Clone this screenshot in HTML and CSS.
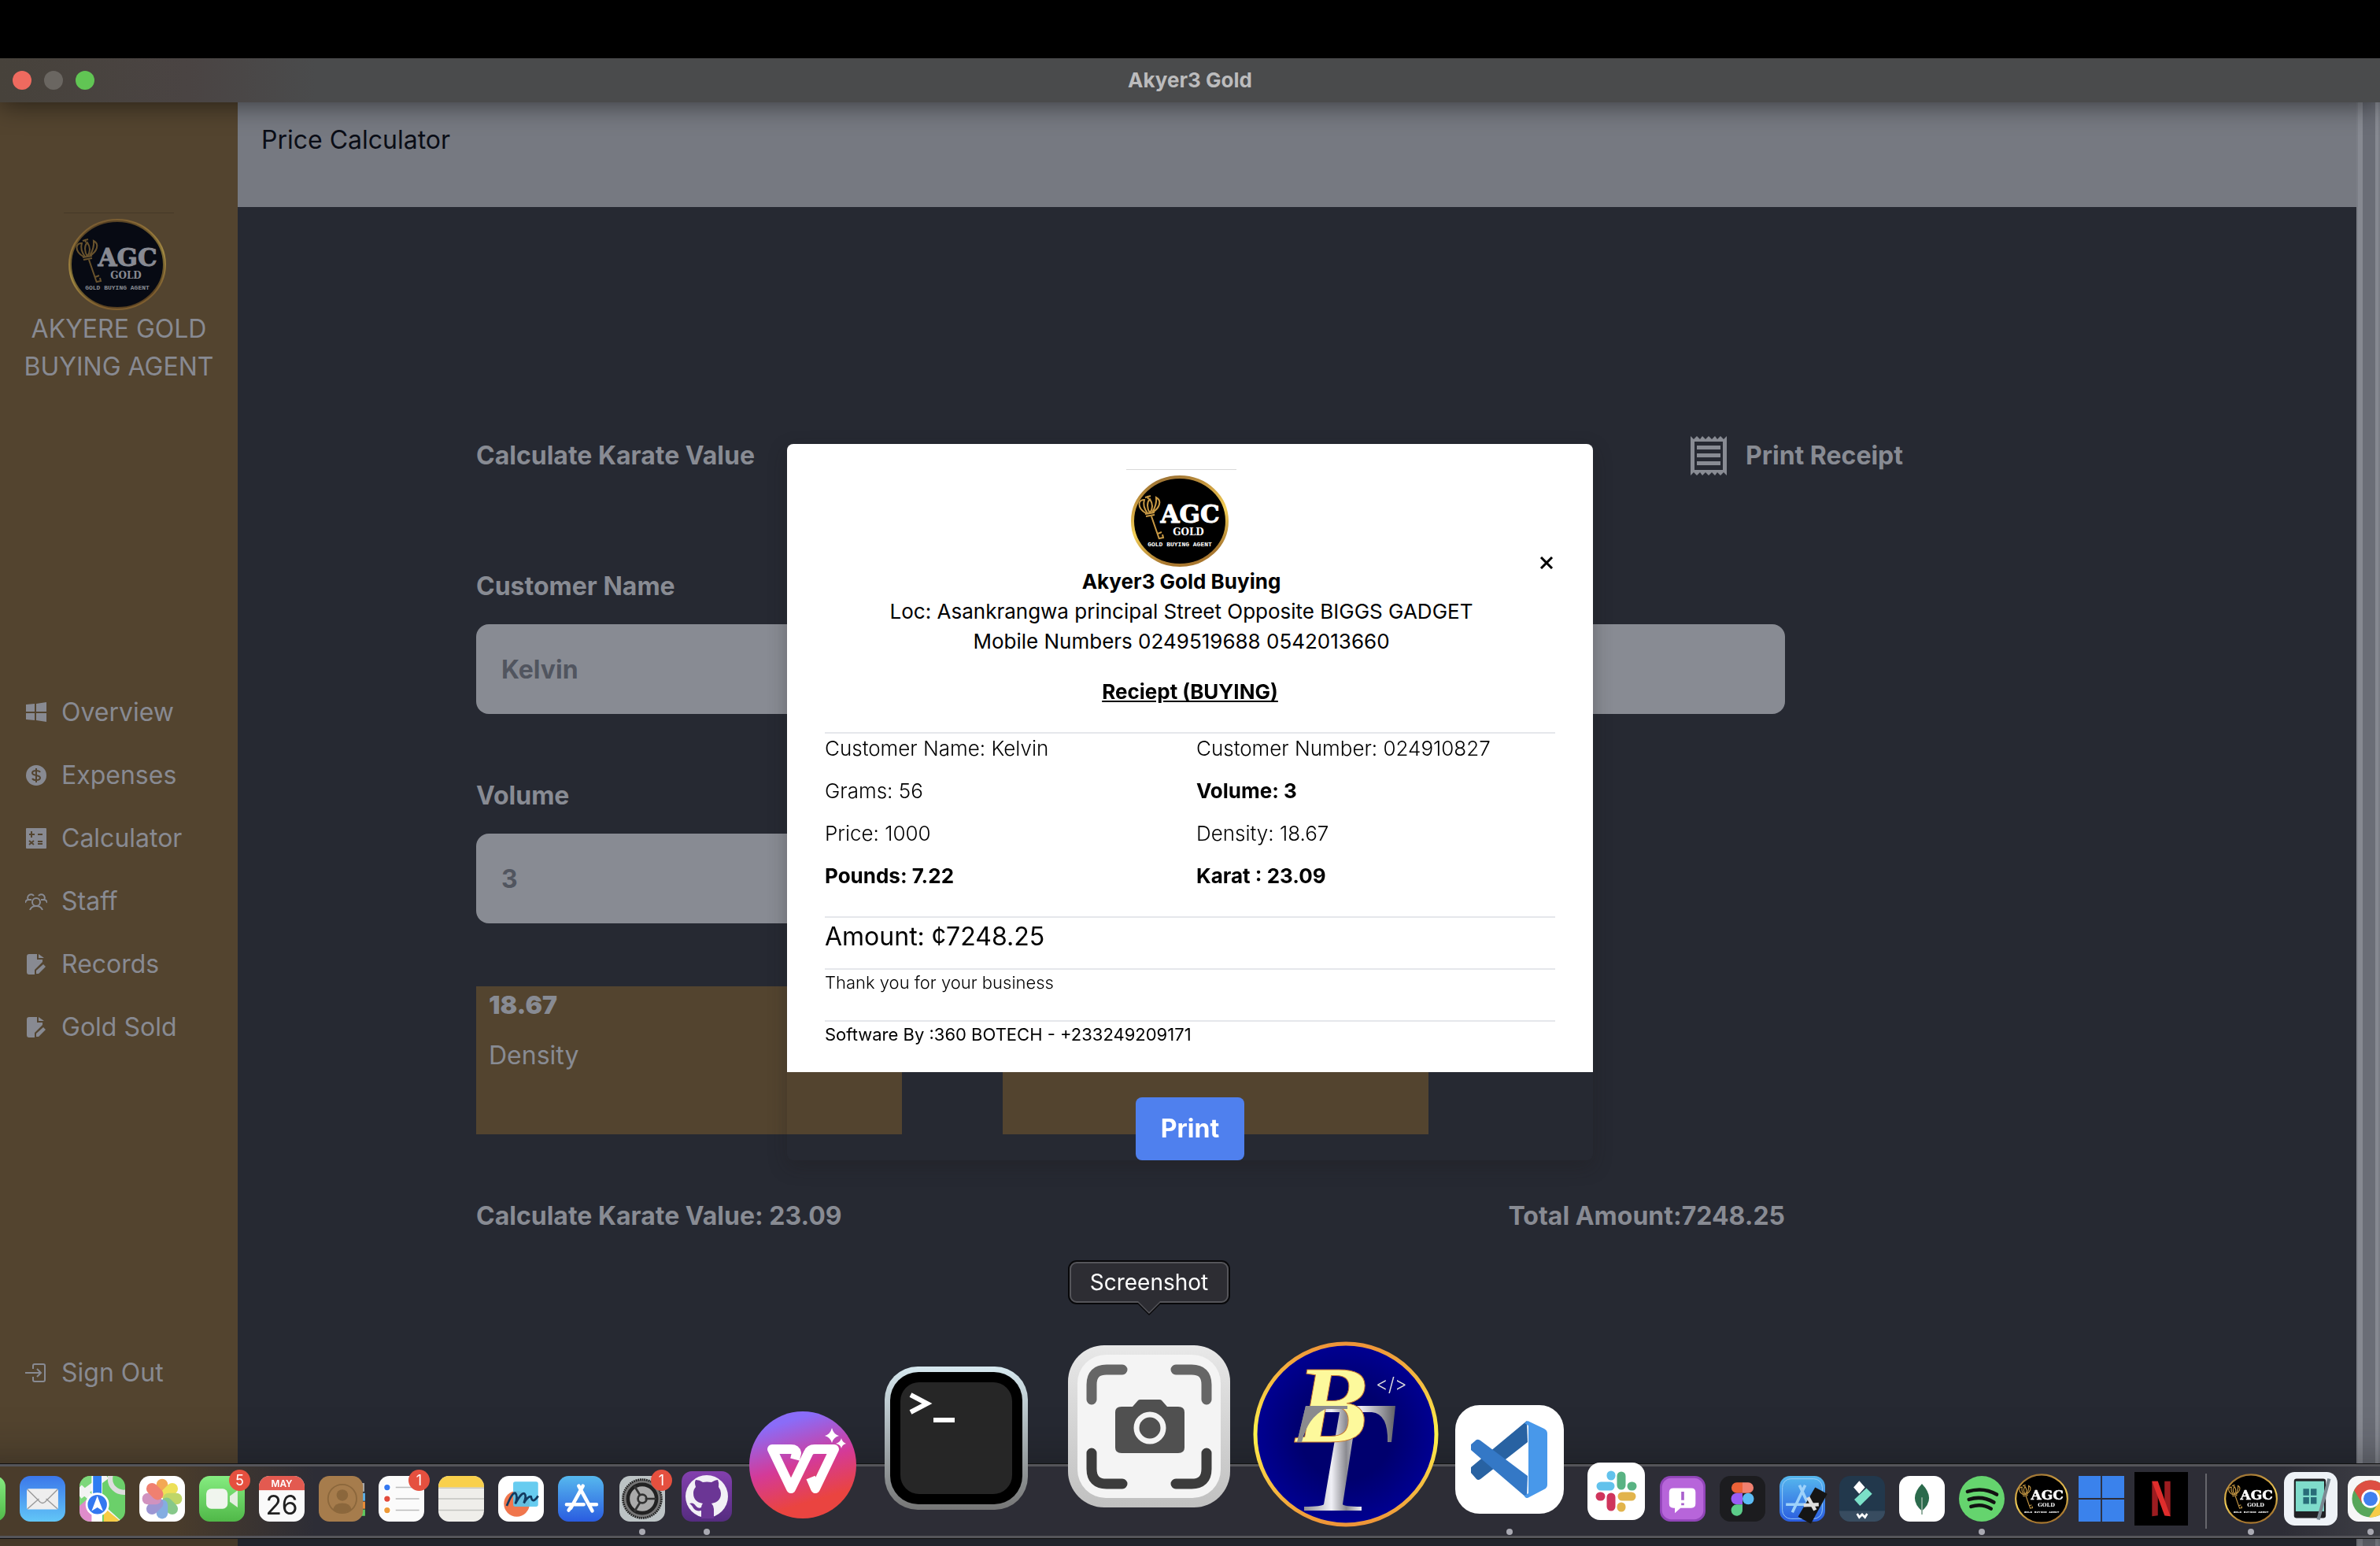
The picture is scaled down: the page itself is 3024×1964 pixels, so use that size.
FILE: index.html
```html
<!DOCTYPE html>
<html lang="en">
  <head>
    <meta charset="UTF-8" />
    <meta name="viewport" content="width=device-width, initial-scale=1.0" />
    <title>Akyer3 Gold</title>
    <link rel="stylesheet" href="styles.css">
  </head>

  <body>
    <!-- shared shapes -->
    <svg class="defs" aria-hidden="true">
      <defs>
        <linearGradient id="gold" x1="0" y1="0" x2="0.3" y2="1">
          <stop offset="0" stop-color="#8a6230" />
          <stop offset="0.3" stop-color="#c8993f" />
          <stop offset="0.6" stop-color="#f2cf57" />
          <stop offset="1" stop-color="#a8772f" />
        </linearGradient>
        <linearGradient id="wps" x1="0.3" y1="0" x2="0.6" y2="1">
          <stop offset="0.1" stop-color="#8a6cf8" />
          <stop offset="0.5" stop-color="#d43a98" />
          <stop offset="0.85" stop-color="#ea4440" />
        </linearGradient>
        <linearGradient id="frame" x1="0" y1="0" x2="0" y2="1">
          <stop offset="0" stop-color="#d6e8ef" />
          <stop offset="1" stop-color="#767676" />
        </linearGradient>
        <linearGradient id="shell" x1="0" y1="0" x2="0" y2="1">
          <stop offset="0" stop-color="#e8e8e8" />
          <stop offset="1" stop-color="#c0c0c0" />
        </linearGradient>
        <linearGradient id="ring" x1="0" y1="0" x2="0" y2="1">
          <stop offset="0" stop-color="#ee9438" />
          <stop offset="0.5" stop-color="#fdf24c" />
          <stop offset="1" stop-color="#ee9438" />
        </linearGradient>
        <radialGradient id="navy">
          <stop offset="0.5" stop-color="#00006e" />
          <stop offset="1" stop-color="#000092" />
        </radialGradient>
        <linearGradient id="steel" x1="0" y1="0" x2="1" y2="0">
          <stop offset="0" stop-color="#77777c" />
          <stop offset="0.35" stop-color="#f0f0f6" />
          <stop offset="0.5" stop-color="#8a8a90" />
          <stop offset="0.65" stop-color="#ececf2" />
          <stop offset="1" stop-color="#606066" />
        </linearGradient>
        <linearGradient id="blue" x1="0" y1="0" x2="0" y2="1">
          <stop offset="0" stop-color="#3b77ea" />
          <stop offset="1" stop-color="#62c6f7" />
        </linearGradient>
        <linearGradient id="store" x1="0" y1="0" x2="0" y2="1">
          <stop offset="0" stop-color="#56b8ee" />
          <stop offset="1" stop-color="#2a5ce0" />
        </linearGradient>
        <linearGradient id="green" x1="0" y1="0" x2="0" y2="1">
          <stop offset="0" stop-color="#85ec80" />
          <stop offset="1" stop-color="#50b848" />
        </linearGradient>
        <linearGradient id="hub" x1="0" y1="0" x2="0" y2="1">
          <stop offset="0" stop-color="#8340ae" />
          <stop offset="1" stop-color="#552c80" />
        </linearGradient>
        <clipPath id="tile"><rect width="64" height="64" rx="15" /></clipPath>
      </defs>
      <symbol id="file-edit" viewBox="0 0 28 28">
        <path fill="currentColor" d="M5 1H15V8H22V11L12 21V27H5Q2 27 2 24V4Q2 1 5 1ZM17 1L24 6H17ZM14 25V22L23 14L26 17L17 26H14Z" />
      </symbol>
    </svg>

    <div class="window">
      <header class="titlebar">
        <span class="light close"></span>
        <span class="light minimise"></span>
        <span class="light zoom"></span>
        <div class="window-title">Akyer3 Gold</div>
      </header>

      <div class="app">
        <aside class="sidebar">
          <div class="brand">
            <div class="logo">
              <svg viewBox="0 0 124 118">
                <g id="agc">
                  <ellipse class="agc-disc" cx="62" cy="59" rx="60" ry="56" />
                  <g class="agc-gold">
                    <ellipse cx="62" cy="59" rx="60" ry="56" fill="none" stroke="url(#gold)" stroke-width="4" />
                    <path d="M19 49C7 42 9 31 17 32C15 38 18 45 21 49M24 49C20 42 20 35 24 31C28 37 28 43 24 49M27 48C36 43 40 33 32 29C33 37 30 43 27 48M18 50L30 48M19 53L30 51M21 27L22 31M18 29L25 27" />
                    <path d="M26 53L36 82M36 81L41 80L40 76M34 75L39 73" />
                  </g>
                  <g class="agc-text">
                    <text class="agc-name" x="75" y="61">AGC</text>
                    <text class="agc-sub" x="73" y="77">GOLD</text>
                    <text class="agc-tag" x="62" y="91">GOLD BUYING AGENT</text>
                  </g>
                </g>
              </svg>
            </div>
            <div>AKYERE GOLD<br />BUYING AGENT</div>
          </div>
          <nav class="menu">
            <a href="#"><svg viewBox="0 0 28 28"><path fill="currentColor" d="M1 4L12 3V13H1ZM14 3L27 1V13H14ZM1 15H12V24L1 23ZM14 15H27V26L14 24Z" /></svg>Overview</a>
            <a href="#"><svg viewBox="0 0 28 28"><circle cx="14" cy="14" r="13" fill="currentColor" /><path d="M19 10Q18 8 14 8Q9 8 9 11Q9 13 14 14Q19 15 19 17Q19 20 14 20Q10 20 9 18M14 5V23" fill="none" stroke="#53442f" stroke-width="2" /></svg>Expenses</a>
            <a href="#"><svg viewBox="0 0 28 28"><rect x="1" y="1" width="26" height="26" rx="1" fill="currentColor" /><path d="M5 9H12M8 5V13M16 9H22M5 17L11 22M11 17L5 22M16 18H22M16 21H22" stroke="#53442f" stroke-width="2" /></svg>Calculator</a>
            <a href="#"><svg viewBox="0 0 28 28"><g fill="none" stroke="currentColor" stroke-width="2"><circle cx="14" cy="15" r="5" /><path d="M6 25Q8 20 14 20Q20 20 22 25M11 7A4 4 0 1 0 4 12Q1 12 0 16M17 7A4 4 0 1 1 24 12Q27 12 28 16M4 12H8M24 12H20" /></g></svg>Staff</a>
            <a href="#"><svg><use href="#file-edit" /></svg>Records</a>
            <a href="#"><svg><use href="#file-edit" /></svg>Gold Sold</a>
          </nav>
          <div class="menu">
            <a href="#"><svg viewBox="0 0 28 28"><path d="M10 9V5Q10 3 12 3H23Q25 3 25 5V23Q25 25 23 25H12Q10 25 10 23V19M0 14H19M15 9L20 14L15 19" fill="none" stroke="currentColor" stroke-width="2" /></svg>Sign Out</a>
          </div>
        </aside>

        <main class="main">
          <div class="page-head">Price Calculator</div>
          <div class="content">
            <div class="title-row">
              <span>Calculate Karate Value</span>
              <button class="print-receipt">
                <svg viewBox="0 0 46 50"><path fill="currentColor" fill-rule="evenodd" d="M0 0L4 4L8 0L12 4L15 0L19 4L23 0L27 4L31 0L34 4L38 0L42 4L46 0V50L42 46L38 50L34 46L31 50L27 46L23 50L19 46L15 50L12 46L8 50L4 46L0 50ZM5 7V43H41V7ZM8 12H38V17H8ZM8 22H38V27H8ZM8 32H38V37H8Z" /></svg>
                Print Receipt
              </button>
            </div>
            <form class="calc-form">
              <div class="field">
                <label for="customer">Customer Name</label>
                <input id="customer" type="text" value="Kelvin" />
              </div>
              <div class="field">
                <input type="text" aria-label="Customer Number" />
              </div>
              <div class="field">
                <label for="volume">Volume</label>
                <input id="volume" type="text" value="3" />
              </div>
            </form>
            <div class="cards">
              <div class="card"><b>18.67</b><span>Density</span></div>
              <div class="card"></div>
            </div>
            <div class="totals">
              <span>Calculate Karate Value: 23.09</span>
              <span>Total Amount:7248.25</span>
            </div>
          </div>
        </main>
        <div class="scrollbar"></div>
      </div>
    </div>

    <div class="overlay">
      <div class="modal">
        <div class="receipt">
          <div class="receipt-head">
            <div class="shop">
              <div class="logo"><svg viewBox="0 0 124 118"><use href="#agc" /></svg></div>
              <b>Akyer3 Gold Buying</b>
              <div>Loc: Asankrangwa principal Street Opposite BIGGS GADGET</div>
              <div>Mobile Numbers 0249519688 0542013660</div>
            </div>
            <button class="dismiss" aria-label="Close">
              <svg viewBox="0 0 16 16"><path d="M1 1L15 15M15 1L1 15" stroke="#000" stroke-width="3" /></svg>
            </button>
          </div>
          <h1>Reciept (BUYING)</h1>
          <div class="details">
            <div>Customer Name: Kelvin</div>
            <div>Customer Number: 024910827</div>
            <div>Grams: 56</div>
            <b>Volume: 3</b>
            <div>Price: 1000</div>
            <div>Density: 18.67</div>
            <b>Pounds: 7.22</b>
            <b>Karat : 23.09</b>
          </div>
          <div class="amount">Amount: ¢7248.25</div>
          <div class="note">Thank you for your business</div>
          <div class="note">Software By :360 BOTECH - +233249209171</div>
        </div>
        <button class="print">Print</button>
      </div>
    </div>

    <div class="dock">
      <div class="slot"><svg viewBox="0 0 64 64"><rect width="64" height="64" rx="15" fill="url(#green)" /></svg></div>
      <div class="slot"><svg viewBox="0 0 64 64"><rect width="64" height="64" rx="15" fill="url(#blue)" /><rect x="10" y="18" width="44" height="29" rx="3" fill="#eee" /><path d="M11 46L27 32M53 46L37 32M11 19L29 37Q32 39 35 37L53 19" fill="none" stroke="#999" stroke-width="1.5" /></svg></div>
      <div class="slot"><svg viewBox="0 0 64 64"><g clip-path="url(#tile)"><rect width="64" height="64" fill="#6bd06a" /><path d="M0 26L30 38V64H0Z" fill="#df8ccb" /><path d="M0 0H18V26L0 42Z" fill="#7ed77b" /><path d="M0 16L64 74M0 28L38 0" stroke="#f3f3f3" stroke-width="9" /><path d="M34 44L58 64H34Z" fill="#f7cc45" /><path d="M17 0H32V64H17Z" fill="#fff" /><path d="M19 0H31V34H19Z" fill="#2f7df2" /><circle cx="62" cy="4" r="19" fill="none" stroke="#ddd" stroke-width="7" /></g><circle cx="25" cy="40" r="15" fill="#3478f0" stroke="#fff" stroke-width="3" /><path d="M25 28L33 49L25 44L17 49Z" fill="#fff" /></svg></div>
      <div class="slot"><svg viewBox="0 0 64 64"><rect width="64" height="64" rx="15" fill="#fff" /><g opacity="0.85"><rect x="24" y="4" width="16" height="27" rx="8" fill="#f29a37" /><rect x="24" y="4" width="16" height="27" rx="8" fill="#eadb3c" transform="rotate(45 32 32)" /><rect x="24" y="4" width="16" height="27" rx="8" fill="#b5d04e" transform="rotate(90 32 32)" /><rect x="24" y="4" width="16" height="27" rx="8" fill="#73bf76" transform="rotate(135 32 32)" /><rect x="24" y="4" width="16" height="27" rx="8" fill="#6f9fdc" transform="rotate(180 32 32)" /><rect x="24" y="4" width="16" height="27" rx="8" fill="#8b84cc" transform="rotate(225 32 32)" /><rect x="24" y="4" width="16" height="27" rx="8" fill="#c87fb5" transform="rotate(270 32 32)" /><rect x="24" y="4" width="16" height="27" rx="8" fill="#ee6b58" transform="rotate(315 32 32)" /></g></svg></div>
      <div class="slot"><svg viewBox="0 0 64 64"><rect width="64" height="64" rx="15" fill="url(#green)" /><rect x="10" y="18" width="30" height="28" rx="7" fill="#f0f5ee" /><path d="M43 28L54 20V44L43 36Z" fill="#e4efe1" /></svg><span class="badge">5</span></div>
      <div class="slot"><svg viewBox="0 0 64 64"><g clip-path="url(#tile)"><rect width="64" height="64" fill="#fafafa" /><rect width="64" height="20" fill="#e35a50" /></g><g text-anchor="middle" font-family="Inter, sans-serif"><text x="32" y="15" font-size="13" font-weight="600" fill="#fff">MAY</text><text x="32" y="54" font-size="37" fill="#222">26</text></g></svg></div>
      <div class="slot"><svg viewBox="0 0 64 64"><path d="M58 10H64V22H58Z" fill="#aaa" /><path d="M58 24H65V35H58Z" fill="#5cb4ee" /><path d="M58 36H65V46H58Z" fill="#f08f38" /><path d="M58 47H65V56H58Z" fill="#60cc60" /><rect width="62" height="64" rx="15" fill="#a67c4c" /><g fill="#8b673c"><circle cx="33" cy="27" r="8" /><path d="M20 47Q22 38 33 38Q44 38 46 47Q33 56 20 47Z" /></g><circle cx="33" cy="32" r="20" fill="none" stroke="#8b673c" stroke-width="2" /></svg></div>
      <div class="slot"><svg viewBox="0 0 64 64"><rect width="64" height="64" rx="15" fill="#fbfbfb" /><path d="M24 16H57M24 32H57M24 48H57" stroke="#bbb" stroke-width="1.5" /><g stroke="#fff" stroke-width="2"><circle cx="12" cy="16" r="5" fill="#3478f0" /><circle cx="12" cy="32" r="5" fill="#e24b3c" /><circle cx="12" cy="48" r="5" fill="#ee9a37" /></g></svg><span class="badge">1</span></div>
      <div class="slot"><svg viewBox="0 0 64 64"><g clip-path="url(#tile)"><rect width="64" height="64" fill="#efeeea" /><rect width="64" height="16" fill="#f9d04c" /><path d="M0 17H64M0 32H64M0 48H64" stroke="#c4c4c0" stroke-width="1.5" /></g></svg></div>
      <div class="slot"><svg viewBox="0 0 64 64"><rect width="64" height="64" rx="15" fill="#fff" /><circle cx="26" cy="39" r="18" fill="#f0764d" /><rect x="21" y="8" width="35" height="35" rx="3" fill="#56c6ee" opacity="0.9" /><path d="M12 42Q20 22 24 24Q28 28 24 39Q33 22 37 25Q40 28 36 38Q42 28 46 29Q48 40 56 28" fill="none" stroke="#123a60" stroke-width="3" /></svg></div>
      <div class="slot"><svg viewBox="0 0 64 64"><rect width="64" height="64" rx="15" fill="url(#store)" /><path d="M35 14L18 45M29 14L48 49M12 40H36M43 40H54M15 48L17 45" stroke="#fff" stroke-width="5" stroke-linecap="round" /></svg></div>
      <div class="slot near running"><svg viewBox="0 0 64 64"><rect width="64" height="64" rx="15" fill="#bcc3c5" /><circle cx="32" cy="32" r="27" fill="#777" stroke="#222" stroke-width="3" stroke-dasharray="2 1" /><circle cx="32" cy="32" r="20" fill="#aaa" stroke="#222" stroke-width="5" /><circle cx="32" cy="32" r="6" fill="none" stroke="#333" stroke-width="3" /><path d="M36 32H52M29 27L21 14M29 37L21 50" stroke="#333" stroke-width="3" /></svg><span class="badge">1</span></div>
      <div class="slot github running"><svg viewBox="0 0 64 64"><rect width="64" height="64" rx="13" fill="url(#hub)" /><circle cx="32" cy="32" r="27" fill="#f2f0f6" /><path d="M25 60V50Q17 52 14 45Q12 42 10 41Q15 39 18 44Q21 48 25 46Q25 43 27 41Q15 39 15 28Q15 23 18 20Q16 14 18 11Q23 11 27 14Q32 13 38 14Q43 11 46 11Q48 15 47 20Q50 24 50 28Q50 39 38 41Q41 44 41 48V60Z" fill="#6b3695" /></svg></div>
      <div class="slot wps"><svg viewBox="0 0 137 137"><circle cx="68" cy="68" r="68" fill="url(#wps)" /><path d="M58 61L60 53Q59 48 53 48L29 48L53 98L75 53Q77 48 83 48H108L84 98L78 84" fill="none" stroke="#fff" stroke-width="12" stroke-linejoin="round" /><path d="M105 21Q107 29 114 31Q107 33 105 40Q103 33 96 31Q103 29 105 21ZM117 34Q118 39 123 41Q118 42 117 47Q116 42 110 41Q116 39 117 34Z" fill="#fff" /></svg></div>
      <div class="slot terminal"><svg viewBox="0 0 182 182"><rect width="182" height="182" rx="42" fill="url(#frame)" /><rect x="7" y="7" width="168" height="168" rx="36" fill="#000" /><rect x="20" y="20" width="142" height="142" rx="24" fill="#262626" /><path d="M33 36L54 47L33 58" fill="none" stroke="#fff" stroke-width="6" /><path d="M62 68H89" stroke="#fff" stroke-width="6" /></svg></div>
      <div class="slot screenshot">
        <div class="tooltip">Screenshot</div>
        <svg viewBox="0 0 206 206"><rect width="206" height="206" rx="46" fill="url(#shell)" /><rect x="12" y="12" width="182" height="182" rx="36" fill="#f4f4f4" /><g fill="none" stroke-width="13" stroke-linecap="round"><path d="M30 69V50Q30 31 49 31H69M137 31H157Q176 31 176 50V69" stroke="#666" /><path d="M30 137V157Q30 176 49 176H69M137 176H157Q176 176 176 157V137" stroke="#3c3c3c" /></g><path d="M68 78H82L89 70Q90 69 92 69H116Q118 69 119 70L126 78H140Q148 78 148 85V130Q148 137 140 137H68Q60 137 60 130V85Q60 78 68 78Z" fill="#505050" /><circle cx="104" cy="105" r="17" fill="none" stroke="#f4f4f4" stroke-width="7" /></svg>
      </div>
      <div class="slot botech"><svg viewBox="0 0 236 236"><circle cx="118" cy="118" r="115" fill="url(#navy)" stroke="url(#ring)" stroke-width="5" /><path d="M67 82H181L176 128H171Q172 92 151 90H132L114 207Q115 210 138 210V215H65V210Q88 210 90 207L110 90H90Q72 92 61 128H56Z" fill="url(#steel)" /><text x="54" y="128" font-size="140" font-family="Liberation Serif, serif" font-style="italic" font-weight="bold" fill="#fdf99c" stroke="#c87a32" stroke-width="1">B</text><path d="M67 82H120V86H92Q70 96 62 128H56Z" fill="#8a8a8e" /><text x="156" y="63" font-size="24" font-family="Inter, sans-serif" font-weight="300" fill="#ddd">&lt;/&gt;</text></svg></div>
      <div class="slot code running"><svg viewBox="0 0 138 138"><rect width="138" height="138" rx="31" fill="#fff" /><path d="M91 20L20 79V86L27 94Q29 96 32 94L92 47Z" fill="#2862a2" /><path d="M91 118L20 57V50L27 44Q29 43 32 45L92 90Z" fill="#3478c6" /><path d="M92 20L113 30Q117 32 117 36V101Q117 105 113 107L92 118Q88 118 88 115L93 112V26L88 23Z" fill="#4898ea" /></svg></div>
      <div class="slot slack"><svg viewBox="0 0 73 73"><rect width="73" height="73" rx="16" fill="#fff" /><g stroke-width="11" stroke-linecap="round" fill="none"><path d="M17 30H29M30 17V16" stroke="#62c2ec" /><path d="M43 17V29M57 30H56" stroke="#59b383" /><path d="M44 43H56M43 57V56" stroke="#e2b44c" /><path d="M30 44V56M17 43H16" stroke="#cf355c" /></g></svg></div>
      <div class="slot"><svg viewBox="0 0 64 64"><rect width="64" height="64" rx="15" fill="#9145b8" /><rect x="3" y="3" width="58" height="58" rx="13" fill="#b765da" /><path d="M19 17H44Q50 17 50 23V39Q50 45 44 45H29L21 52V45H19Q13 45 13 39V23Q13 17 19 17Z" fill="#fff" /><path d="M32 22V34M32 38V41" stroke="#a95fcd" stroke-width="4" /></svg></div>
      <div class="slot"><svg viewBox="0 0 64 64"><rect width="64" height="64" rx="15" fill="#1c1c1f" /><path d="M24 9H32V24H24A7 7 0 0 1 24 9Z" fill="#ec6238" /><path d="M32 9H40A7 7 0 0 1 40 24H32Z" fill="#f08070" /><path d="M24 24H32V40H24A8 8 0 0 1 24 24Z" fill="#9a5cf5" /><circle cx="40" cy="32" r="8" fill="#5cbcf5" /><path d="M24 40H32V47A8 8 0 1 1 24 40Z" fill="#5ccc89" /></svg></div>
      <div class="slot"><svg viewBox="0 0 64 64"><rect width="64" height="64" rx="15" fill="url(#store)" /><rect x="4" y="4" width="56" height="56" rx="12" fill="none" stroke="#9ed2fa" /><path d="M36 13L18 51M28 13L45 50M9 40H52" stroke="#9ed2fa" stroke-width="4" /><path d="M50 16L67 25L44 67L26 57Z" fill="#151515" /><path d="M40 30L50 48M34 41L55 40" stroke="#ddd" stroke-width="5" /></svg></div>
      <div class="slot"><svg viewBox="0 0 64 64"><g clip-path="url(#tile)"><rect width="64" height="64" fill="#22384c" /><rect y="49" width="64" height="15" fill="#384c60" /></g><path d="M28 7L36 16L28 25L20 16Z" fill="#fff" /><path d="M38 17L46 25L29 42L21 33Z" fill="#7be0c8" /><path d="M25 53L28 58L32 54L36 58L39 53" fill="none" stroke="#fff" stroke-width="3" /></svg></div>
      <div class="slot"><svg viewBox="0 0 64 64"><rect width="64" height="64" rx="15" fill="#fff" /><path d="M32 11Q52 32 32 49Q12 32 32 11Z" fill="#2b6a4c" /><path d="M32 30V54" stroke="#8aa898" stroke-width="2" /></svg></div>
      <div class="slot running"><svg viewBox="0 0 64 64"><circle cx="32" cy="32" r="32" fill="#65d46e" /><path d="M12 22Q34 15 53 26M14 33Q32 27 49 37M17 43Q32 38 45 46" fill="none" stroke="#111" stroke-width="5" stroke-linecap="round" /></svg></div>
      <div class="slot wide"><svg viewBox="0 0 124 118"><use href="#agc" /></svg></div>
      <div class="slot"><svg viewBox="0 0 64 64"><path d="M0 0H31V31H0ZM33 0H64V31H33ZM0 33H31V64H0ZM33 33H64V64H33Z" fill="#3a82ec" /></svg></div>
      <div class="slot wide"><svg viewBox="0 0 64 64"><path d="M0 0H64V64H0Z" fill="#000" /><path d="M21 11H28V52L21 53ZM36 11H43V53L36 52Z" fill="#9c1c20" /><path d="M21 11H28L43 53L36 52Z" fill="#e02d2c" /></svg></div>
      <div class="divider"></div>
      <div class="slot wide running"><svg viewBox="0 0 124 118"><use href="#agc" /></svg></div>
      <div class="slot wide"><svg viewBox="0 0 64 64"><rect width="64" height="64" rx="13" fill="#eef2f7" /><rect x="12" y="8" width="38" height="47" rx="3" fill="#202024" /><rect x="14" y="11" width="34" height="36" fill="#7fdccb" /><path d="M23 20H30V28H23ZM32 20H39V28H32ZM23 30H30V38H23ZM32 30H39V38H32Z" fill="#286c78" /><path d="M54 8L41 57" stroke="#7b8992" stroke-width="4" /></svg></div>
      <div class="slot running"><svg viewBox="0 0 64 64"><rect width="64" height="64" rx="15" fill="#f6f6f6" /><circle cx="32" cy="32" r="26" fill="#57a65a" /><path d="M9 20A26 26 0 0 1 55 20H32L20 38Z" fill="#dd4f42" /><path d="M55 20A26 26 0 0 1 30 58L43 38L32 20Z" fill="#f7cb48" /><circle cx="32" cy="32" r="13" fill="#fff" /><circle cx="32" cy="32" r="10" fill="#4080ee" /></svg></div>
    </div>
  </body>
</html>
```

FILE: styles.css
```css
* {
  box-sizing: border-box;
}

body {
  --disc: #000;
  --lettering: #fff;
  --shine: 1;
  margin: 0;
  padding-top: 74px;
  background: #000;
  font-family: Inter, sans-serif;
  font-size: 32px;
  line-height: 48px;
  overflow: hidden;
}

button,
input {
  font: inherit;
  border: 0;
}

button {
  padding: 0;
  background: none;
  cursor: pointer;
}

svg {
  display: block;
  flex: none;
}

.defs {
  position: absolute;
  width: 0;
  height: 0;
}

.window {
  display: flex;
  flex-direction: column;
  min-height: calc(100vh - 74px);
}

/* title bar */
.titlebar {
  display: flex;
  align-items: center;
  gap: 16px;
  height: 56px;
  padding: 0 16px;
  position: relative;
  background: linear-gradient(to right, #47423b, #4a4443 240px, #4a4b4c 400px);
  box-shadow: 0 4px 32px rgba(0, 0, 0, 0.5);
}

.light {
  width: 24px;
  height: 24px;
  border-radius: 50%;
}

.close {
  background: #ee6a5f;
}

.minimise {
  background: #6a6661;
}

.zoom {
  background: #61c554;
}

.window-title {
  flex: 1;
  margin-right: 120px;
  text-align: center;
  font-size: 26px;
  font-weight: bold;
  color: #bcbcbd;
}

.app {
  display: flex;
  flex: 1;
}

/* sidebar */
.sidebar {
  display: flex;
  flex-direction: column;
  justify-content: space-between;
  width: 302px;
  padding: 140px 32px 196px;
  background: #53442f;
  color: #888a92;
}

.brand {
  --disc: #070a13;
  --lettering: #888a92;
  --shine: 0.5;
  margin: 0 -16px;
  text-align: center;
}

.logo {
  width: 140px;
  height: 124px;
  margin: 0 auto;
  padding: 6px 6px 0;
  border-top: 1px solid rgba(0, 0, 0, 0.15);
}

.logo svg {
  width: 124px;
  height: 118px;
}

.agc-disc {
  fill: var(--disc);
}

.agc-gold {
  fill: none;
  stroke: #c99a45;
  stroke-width: 2px;
  opacity: var(--shine);
}

.agc-text {
  fill: var(--lettering);
  font-family: "DejaVu Serif", serif;
  font-weight: bold;
  text-anchor: middle;
}

.agc-name {
  font-size: 31px;
  stroke: var(--lettering);
  stroke-width: 1px;
}

.agc-sub {
  font-size: 12px;
}

.agc-tag {
  font-family: "Liberation Mono", monospace;
  font-size: 8px;
}

.menu {
  display: flex;
  flex-direction: column;
  gap: 32px;
}

.menu a {
  display: flex;
  align-items: center;
  gap: 18px;
  color: inherit;
  text-decoration: none;
}

.menu svg {
  width: 28px;
  height: 28px;
}

/* calculator page */
.main {
  flex: 1;
  background: #262932;
  color: #888b93;
}

.page-head {
  height: 133px;
  padding: 24px 30px;
  background: #767981;
  color: #0a0d16;
}

.content {
  padding: 292px 576px 0 303px;
  font-weight: bold;
}

.title-row {
  display: flex;
  justify-content: space-between;
  margin-bottom: 118px;
}

.print-receipt {
  display: flex;
  align-items: center;
  gap: 24px;
  height: 48px;
  color: inherit;
}

.print-receipt svg {
  width: 46px;
  height: 50px;
}

.calc-form,
.cards,
.totals {
  margin: 0 150px 80px 0;
}

.calc-form {
  display: grid;
  grid-template-columns: 1fr 1fr;
  gap: 80px 64px;
}

.field {
  display: flex;
  flex-direction: column;
  justify-content: flex-end;
  gap: 24px;
}

.field input {
  width: 100%;
  height: 114px;
  padding: 0 32px;
  border-radius: 16px;
  background: #888b93;
  color: #51555f;
}

.cards {
  display: grid;
  grid-template-columns: repeat(3, 1fr);
  gap: 128px;
  margin-right: -66px;
}

.card {
  display: flex;
  flex-direction: column;
  gap: 16px;
  height: 188px;
  padding: 0 16px;
  background: #53442f;
}

.card span {
  font-weight: normal;
}

.totals {
  display: flex;
  justify-content: space-between;
}

.scrollbar {
  width: 30px;
  background: linear-gradient(to right, #7b7e86 2px, #868991 2px, #868991 8px, #6a6d76 8px, #6a6d76 24px, #868991 24px, #868991 28px, #7b7e86 28px);
}

/* receipt dialog */
.overlay {
  display: flex;
  align-items: center;
  justify-content: center;
  position: fixed;
  inset: 74px 0 0;
}

.modal {
  display: flex;
  flex-direction: column;
  align-items: center;
  gap: 32px;
  width: 1024px;
  border-radius: 8px;
  box-shadow: 0 8px 24px rgba(30, 26, 26, 0.3);
}

.receipt {
  align-self: stretch;
  padding: 32px 48px;
  border-radius: 8px 8px 0 0;
  background: #fff;
  color: #000;
  font-size: 26px;
  line-height: 38px;
}

.receipt-head {
  display: flex;
  align-items: center;
}

.shop {
  flex: 1;
  text-align: center;
}

.dismiss svg {
  width: 22px;
  height: 16px;
}

.receipt h1 {
  margin: 26px 0 32px;
  text-align: center;
  text-decoration: underline;
  font-size: 26px;
  line-height: 38px;
}

.details {
  display: grid;
  grid-template-columns: 1fr 1fr;
  gap: 16px;
  padding-bottom: 32px;
  border-top: 2px solid #e5e7eb;
  font-weight: 300;
}

.details b {
  font-weight: bold;
}

.amount {
  padding-bottom: 16px;
  border-top: 2px solid #e5e7eb;
  font-size: 32px;
  line-height: 48px;
}

.note {
  padding-bottom: 32px;
  border-top: 2px solid #e5e7eb;
  font-size: 22px;
  font-weight: 300;
  line-height: 32px;
}

.note:last-child {
  padding-bottom: 0;
  font-weight: normal;
}

.print {
  padding: 16px 32px;
  border-radius: 8px;
  background: #4f80ee;
  color: #fff;
  font-weight: bold;
}

/* dock */
.dock {
  display: flex;
  align-items: flex-end;
  position: fixed;
  left: -60px;
  right: -60px;
  bottom: 10px;
  height: 94px;
  border: 3px solid #55555a;
  border-width: 3px 0;
  background: linear-gradient(to right, #4a3c2b 280px, #2d2d36 460px, #2d2d36 2960px, #45464c);
  box-shadow: 0 0 0 1px #111, 0 0 60px rgba(20, 20, 22, 0.5);
}

.slot {
  display: flex;
  flex: none;
  justify-content: center;
  position: relative;
  width: 76px;
  padding-bottom: 18px;
}

.slot svg {
  width: 58px;
  height: 58px;
  overflow: visible;
}

.slot.wide {
  padding-bottom: 13px;
}

.wide svg {
  width: 68px;
  height: 68px;
}

.slot.near {
  width: 80px;
}

.slot.github {
  width: 84px;
}

.github svg {
  width: 64px;
  height: 64px;
}

.slot.wps {
  width: 160px;
  padding-bottom: 21px;
}

.wps svg {
  width: 137px;
  height: 137px;
}

.slot.terminal {
  width: 230px;
  padding-bottom: 33px;
}

.terminal svg {
  width: 182px;
  height: 182px;
}

.slot.screenshot {
  width: 260px;
  padding-bottom: 36px;
}

.screenshot svg {
  width: 206px;
  height: 206px;
}

.slot.botech {
  width: 240px;
  padding-bottom: 11px;
}

.botech svg {
  width: 236px;
  height: 236px;
}

.slot.code {
  width: 176px;
  padding-bottom: 28px;
}

.code svg {
  width: 138px;
  height: 138px;
}

.slot.slack {
  width: 94px;
  padding-bottom: 20px;
}

.slack svg {
  width: 73px;
  height: 73px;
}

.running::after {
  content: "";
  position: absolute;
  bottom: 1px;
  left: calc(50% - 4px);
  width: 8px;
  height: 8px;
  border-radius: 50%;
  background: #a9a9b2;
}

.badge {
  position: absolute;
  top: -8px;
  right: 2px;
  width: 27px;
  height: 27px;
  border-radius: 50%;
  background: #e5503f;
  color: #fff;
  text-align: center;
  font-size: 18px;
  line-height: 27px;
}

.divider {
  width: 2px;
  height: 70px;
  margin: 0 18px 9px;
  background: #66666c;
}

.tooltip {
  position: absolute;
  bottom: 296px;
  padding: 3px 24px;
  border: 2px solid #55555a;
  border-radius: 9px;
  background: #2d2d33;
  box-shadow: 0 0 0 2px #08080a;
  color: #fff;
  font-size: 28px;
  line-height: 42px;
}

.tooltip::after {
  content: "";
  position: absolute;
  top: 100%;
  left: calc(50% - 14px);
  border: 14px solid transparent;
  border-top-color: #2d2d33;
  border-bottom: 0;
  filter: drop-shadow(0 2px 0 #55555a) drop-shadow(0 2px 0 #08080a);
}
```
